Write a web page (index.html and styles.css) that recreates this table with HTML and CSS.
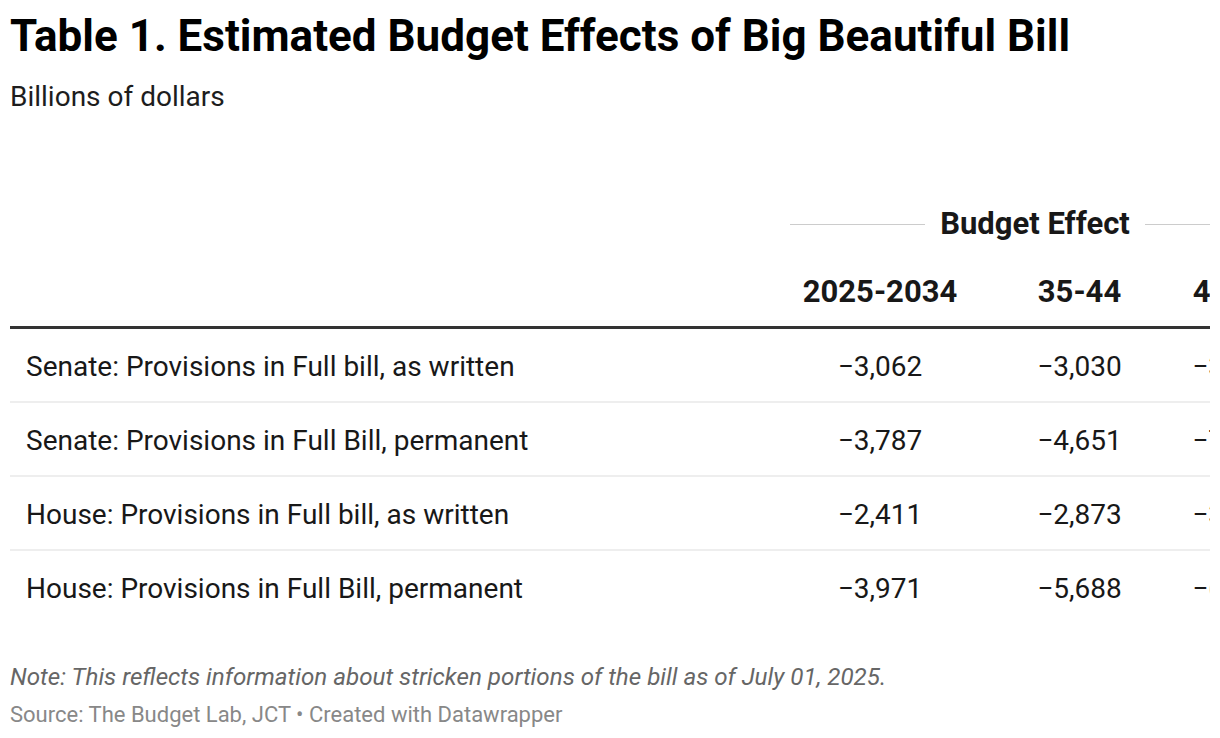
FILE: index.html
```html
<!DOCTYPE html>
<html lang="en">
<head>
<meta charset="utf-8">
<title>Table 1. Estimated Budget Effects of Big Beautiful Bill</title>
<link rel="stylesheet" href="styles.css">
</head>
<body>
<div class="chart">
  <h1 class="title">Table 1. Estimated Budget Effects of Big Beautiful Bill</h1>
  <p class="subtitle">Billions of dollars</p>
  <div class="table-wrap">
    <table class="data">
      <colgroup>
        <col class="c-label">
        <col class="c-wide">
        <col class="c-num">
        <col class="c-num">
      </colgroup>
      <thead>
        <tr class="group-row">
          <th></th>
          <th colspan="3" class="group">
            <div class="group-inner"><span class="rule"></span><span class="group-text">Budget Effect</span><span class="rule"></span></div>
          </th>
        </tr>
        <tr class="head-row">
          <th></th>
          <th class="num">2025-2034</th>
          <th class="num">35-44</th>
          <th class="num">45-54</th>
        </tr>
      </thead>
      <tbody>
        <tr>
          <td class="label">Senate: Provisions in Full bill, as written</td>
          <td class="num">−3,062</td>
          <td class="num">−3,030</td>
          <td class="num">−3,348</td>
        </tr>
        <tr>
          <td class="label">Senate: Provisions in Full Bill, permanent</td>
          <td class="num">−3,787</td>
          <td class="num">−4,651</td>
          <td class="num">−7,102</td>
        </tr>
        <tr>
          <td class="label">House: Provisions in Full bill, as written</td>
          <td class="num">−2,411</td>
          <td class="num">−2,873</td>
          <td class="num">−3,391</td>
        </tr>
        <tr>
          <td class="label">House: Provisions in Full Bill, permanent</td>
          <td class="num">−3,971</td>
          <td class="num">−5,688</td>
          <td class="num">−6,034</td>
        </tr>
      </tbody>
    </table>
  </div>
  <p class="note">Note: This reflects information about stricken portions of the bill as of July 01, 2025.</p>
  <p class="source">Source: The Budget Lab, JCT • Created with Datawrapper</p>
</div>
</body>
</html>
```
FILE: styles.css
```css
html, body {
  margin: 0;
  padding: 0;
  background: #ffffff;
}
body {
  font-family: Roboto, "Liberation Sans", Arial, sans-serif;
  color: #181818;
}
.chart {
  width: 1200px;
  padding: 0 10px;
  overflow: hidden;
}
.title {
  margin: 11px 0 0;
  font-size: 44px;
  line-height: 50px;
  font-weight: 700;
  color: #000;
  white-space: nowrap;
}
.subtitle {
  margin: 19px 0 0;
  font-size: 28px;
  line-height: 34px;
  color: #1d1d1d;
}
.table-wrap {
  width: 1200px;
  overflow: hidden;
  margin-top: 93px;
}
.data {
  width: 1301px;
  table-layout: fixed;
  border-collapse: separate;
  border-spacing: 0;
  font-size: 28px;
  line-height: 34px;
}
.c-label { width: 748px; }
.c-wide { width: 244px; }
.c-num { width: 155px; }
.data th, .data td {
  padding: 0;
  white-space: nowrap;
}
.group-row th {
  padding: 0;
}
.group {
  padding: 0 32px !important;
}
.group-inner {
  display: flex;
  align-items: center;
  gap: 15px;
}
.rule {
  flex: 1;
  height: 1px;
  background: #cccccc;
  margin-top: 0;
}
.group-text {
  font-weight: 700;
  font-size: 31px;
  color: #181818;
}
.head-row th {
  padding: 34px 0 17px;
  font-size: 31px;
  font-weight: 700;
  border-bottom: 3px solid #333333;
}
.data td {
  padding: 21px 0 17px;
  border-bottom: 2px solid #eeeeee;
}
.data tbody tr:last-child td {
  border-bottom: none;
}
.label {
  text-align: left;
  padding-left: 16px !important;
}
.num {
  text-align: center;
}
.note {
  margin: 40px 0 0;
  font-size: 24.2px;
  line-height: 29px;
  font-style: italic;
  color: #666666;
  white-space: nowrap;
}
.source {
  margin: 9px 0 0;
  font-size: 22px;
  line-height: 28px;
  color: #888888;
  white-space: nowrap;
}
```
